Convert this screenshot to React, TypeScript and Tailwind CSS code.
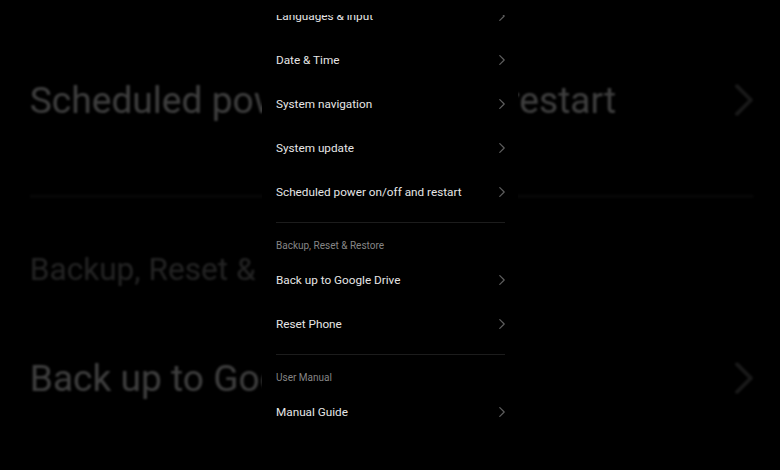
import React from "react";

const Chevron = () => (
  <svg width="6" height="10" viewBox="0 0 6 10" fill="none" className="shrink-0">
    <path d="M0.8 0.6 L5.2 5 L0.8 9.4" stroke="#5e5e5e" strokeWidth="1.2" strokeLinecap="round" strokeLinejoin="round" />
  </svg>
);

const Row = ({ label }: { label: string }) => (
  <div className="h-[44px] flex items-center justify-between">
    <span className="text-[11.75px] leading-[16px] text-[#e6e6e6]">{label}</span>
    <Chevron />
  </div>
);

const Header = ({ label }: { label: string }) => (
  <div className="pt-[16px] pb-[5px] text-[10px] leading-[14px] text-[#858585]">{label}</div>
);

const Sep = () => <div className="mt-[8px] h-px bg-[#1c1c1c]" />;

const Screen = () => (
  <div className="h-[470px] flex flex-col bg-black">
    <div className="h-[15px] shrink-0 bg-black relative z-10" />
    <div className="flex-1 overflow-hidden pl-[14px] pr-[13px]">
      <div className="-mt-[21px]">
        <Row label="Languages & input" />
        <Row label="Date & Time" />
        <Row label="System navigation" />
        <Row label="System update" />
        <Row label="Scheduled power on/off and restart" />
        <Sep />
        <Header label="Backup, Reset & Restore" />
        <Row label="Back up to Google Drive" />
        <Row label="Reset Phone" />
        <Sep />
        <Header label="User Manual" />
        <Row label="Manual Guide" />
      </div>
    </div>
  </div>
);

export default function App() {
  return (
    <div
      className="relative w-[780px] h-[470px] overflow-hidden bg-black"
      style={{ fontFamily: "Roboto, 'Noto Sans', Arial, sans-serif" }}
    >
      <div className="absolute inset-0 flex justify-center pointer-events-none" aria-hidden="true">
        <div className="w-[256px] shrink-0 origin-[128px_234.6px] scale-[3.16] opacity-[0.27] blur-[0.4px]">
          <Screen />
        </div>
      </div>
      <div className="relative flex justify-center">
        <div className="w-[256px] h-[470px] shrink-0">
          <Screen />
        </div>
      </div>
    </div>
  );
}
